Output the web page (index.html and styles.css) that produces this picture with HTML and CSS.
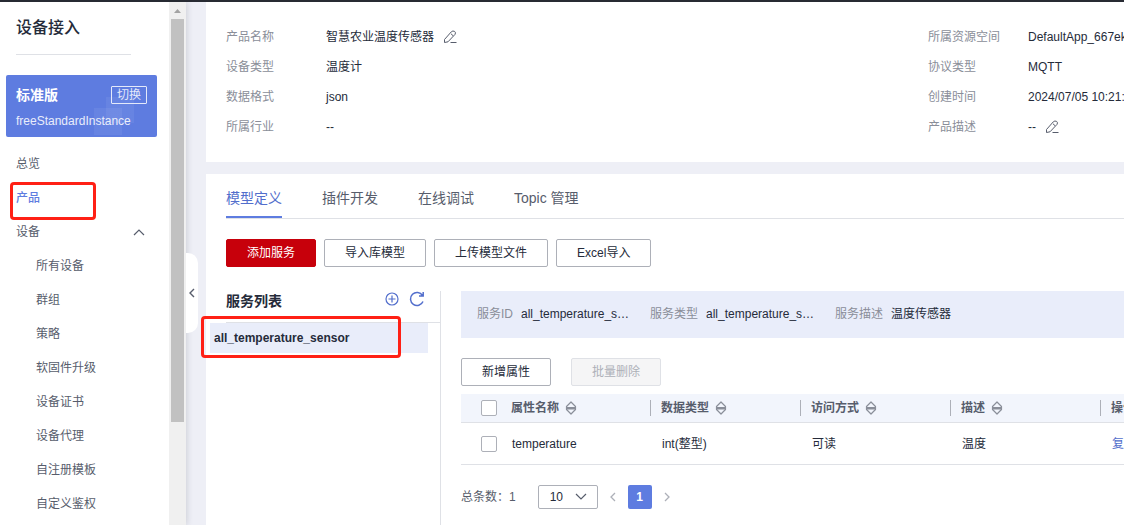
FILE: index.html
```html
<!DOCTYPE html>
<html lang="zh-CN">
<head>
  <meta charset="UTF-8">
  <title>设备接入</title>
  <link rel="stylesheet" href="styles.css">
</head>
<body>
  <svg class="sprite" aria-hidden="true">
    <symbol id="pencil" viewBox="0 0 14 14">
      <path d="M1.5 12.5 L1.5 9.5 L8.3 1.8 Q9.8 .4 11.6 1.4 Q13.2 2.6 12 4.4 L5 11.8 Z M8 3.8 L10.2 5.8 M7.5 12.5 H13.5" fill="none" stroke="currentColor"/>
    </symbol>
    <symbol id="sort" viewBox="0 0 12 14">
      <path d="M6 1 L10.5 5.5 V8.5 L6 13 L1.5 8.5 V5.5 Z" fill="none" stroke="currentColor" stroke-width="1.2" stroke-linejoin="round"/>
      <path d="M1 6 H11 V8.5 H1 Z" fill="currentColor"/>
    </symbol>
  </svg>

  <div class="topbar"></div>
  <div class="layout">
    <aside class="sidebar">
      <div class="sidebar-content">
        <h1>设备接入</h1>
        <div class="instance">
          <div class="instance-top">
            <strong>标准版</strong>
            <button class="switch">切换</button>
          </div>
          <div class="instance-name">freeStandardInstance</div>
        </div>
        <nav class="menu">
          <a href="#">总览</a>
          <a href="#" class="active">产品</a>
          <a href="#" class="group">设备
            <svg width="12" height="8" viewBox="0 0 12 8"><path d="M1 7 L6 2 L11 7" fill="none" stroke="currentColor" stroke-width="1.2"/></svg>
          </a>
          <a href="#" class="sub">所有设备</a>
          <a href="#" class="sub">群组</a>
          <a href="#" class="sub">策略</a>
          <a href="#" class="sub">软固件升级</a>
          <a href="#" class="sub">设备证书</a>
          <a href="#" class="sub">设备代理</a>
          <a href="#" class="sub">自注册模板</a>
          <a href="#" class="sub">自定义鉴权</a>
        </nav>
        <div class="mark mark-product"></div>
      </div>
      <div class="scrollbar">
        <svg width="17" height="17" viewBox="0 0 17 17"><path d="M5 11 L8.5 7 L12 11 Z" fill="#a3a3a3"/></svg>
        <div class="thumb"></div>
      </div>
      <button class="collapse" aria-label="收起">
        <svg width="6" height="10" viewBox="0 0 6 10"><path d="M5 1 L1 5 L5 9" fill="none" stroke="currentColor" stroke-width="1.4"/></svg>
      </button>
    </aside>

    <main class="main">
      <section class="panel info">
        <dl>
          <div><dt>产品名称</dt><dd>智慧农业温度传感器 <svg class="edit"><use href="#pencil"/></svg></dd></div>
          <div><dt>设备类型</dt><dd>温度计</dd></div>
          <div><dt>数据格式</dt><dd>json</dd></div>
          <div><dt>所属行业</dt><dd>--</dd></div>
        </dl>
        <dl>
          <div><dt>所属资源空间</dt><dd>DefaultApp_667ek</dd></div>
          <div><dt>协议类型</dt><dd>MQTT</dd></div>
          <div><dt>创建时间</dt><dd>2024/07/05 10:21:</dd></div>
          <div><dt>产品描述</dt><dd>-- <svg class="edit"><use href="#pencil"/></svg></dd></div>
        </dl>
      </section>

      <section class="panel model">
        <nav class="tabs">
          <a href="#" class="active">模型定义</a>
          <a href="#">插件开发</a>
          <a href="#">在线调试</a>
          <a href="#">Topic 管理</a>
        </nav>
        <div class="buttons">
          <button class="btn primary">添加服务</button>
          <button class="btn">导入库模型</button>
          <button class="btn">上传模型文件</button>
          <button class="btn">Excel导入</button>
        </div>

        <div class="service">
          <div class="service-list">
            <div class="service-head">
              <h2>服务列表</h2>
              <button class="icon" aria-label="添加">
                <svg width="14" height="14" viewBox="0 0 14 14"><path d="M7 3.5 V10.5 M3.5 7 H10.5" stroke="currentColor" stroke-width="1.2"/><circle cx="7" cy="7" r="6" fill="none" stroke="currentColor" stroke-width="1.2"/></svg>
              </button>
              <button class="icon" aria-label="刷新">
                <svg width="16" height="16" viewBox="0 0 16 16"><path d="M13.5 4.5 A6.5 6.5 0 1 0 14 10.5 M14.2 1 V5 H10" fill="none" stroke="currentColor" stroke-width="1.5"/></svg>
              </button>
            </div>
            <a href="#" class="service-item">all_temperature_sensor</a>
            <div class="mark mark-service"></div>
          </div>

          <div class="service-detail">
            <div class="summary">
              <span class="label">服务ID</span><span class="value">all_temperature_sensor</span>
              <span class="label">服务类型</span><span class="value">all_temperature_sensor</span>
              <span class="label">服务描述</span><span class="value">温度传感器</span>
            </div>
            <div class="table-buttons">
              <button class="btn">新增属性</button>
              <button class="btn" disabled>批量删除</button>
            </div>
            <table>
              <thead>
                <tr>
                  <th class="check"><input type="checkbox" aria-label="全选"></th>
                  <th class="col"><div class="head">属性名称<svg class="sort"><use href="#sort"/></svg></div></th>
                  <th class="col"><div class="head">数据类型<svg class="sort"><use href="#sort"/></svg></div></th>
                  <th class="col"><div class="head">访问方式<svg class="sort"><use href="#sort"/></svg></div></th>
                  <th class="col"><div class="head">描述<svg class="sort"><use href="#sort"/></svg></div></th>
                  <th><div class="head">操作</div></th>
                </tr>
              </thead>
              <tbody>
                <tr>
                  <td class="check"><input type="checkbox" aria-label="temperature"></td>
                  <td>temperature</td>
                  <td>int(整型)</td>
                  <td>可读</td>
                  <td>温度</td>
                  <td><a href="#">复制</a></td>
                </tr>
              </tbody>
            </table>
            <div class="pager">
              <label for="pageSize">总条数：1</label>
              <div class="select">
                <select id="pageSize"><option>10</option></select>
                <svg width="12" height="8" viewBox="0 0 12 8"><path d="M1 1 L6 6 L11 1" fill="none" stroke="currentColor" stroke-width="1.2"/></svg>
              </div>
              <button class="arrow" aria-label="上一页">
                <svg width="6" height="10" viewBox="0 0 6 10"><path d="M5 1 L1 5 L5 9" fill="none" stroke="currentColor" stroke-width="1.3"/></svg>
              </button>
              <button class="page">1</button>
              <button class="arrow" aria-label="下一页">
                <svg width="6" height="10" viewBox="0 0 6 10"><path d="M1 1 L5 5 L1 9" fill="none" stroke="currentColor" stroke-width="1.3"/></svg>
              </button>
            </div>
          </div>
        </div>
      </section>
    </main>
  </div>
</body>
</html>
```

FILE: styles.css
```css
* {
  box-sizing: border-box;
}

body {
  margin: 0;
  height: 100vh;
  display: flex;
  flex-direction: column;
  overflow: hidden;
  background: #eeeff6;
  color: #252b3a;
  font-family: "Liberation Sans", "Noto Sans CJK SC", sans-serif;
  font-size: 12px;
  line-height: 20px;
}

h1, h2, dl, dd {
  margin: 0;
}

a {
  color: inherit;
  text-decoration: none;
}

button, select {
  font: inherit;
  color: inherit;
  padding: 0;
  border: none;
  background: none;
  cursor: pointer;
}

svg {
  display: block;
  flex: none;
}

.sprite {
  position: absolute;
  width: 0;
  height: 0;
}

.topbar {
  height: 2px;
  flex: none;
  background: #282b33;
}

.layout {
  display: flex;
  flex: 1;
  min-height: 0;
}

/* sidebar */
.sidebar {
  position: relative;
  display: flex;
  flex: none;
  width: 186px;
  background: #fff;
  box-shadow: 1px 0 6px rgba(37, 43, 58, 0.16);
}

.sidebar-content {
  position: relative;
  flex: 1;
  overflow: hidden;
}

.sidebar h1 {
  margin: 0 38px 20px 16px;
  padding: 14px 0 14px;
  border-bottom: 1px solid #dfe1e6;
  font-size: 16px;
  font-weight: 500;
  line-height: 24px;
}

.instance {
  margin: 0 12px 10px 6px;
  padding: 10px;
  height: 62px;
  border-radius: 2px;
  color: #fff;
  background:
    linear-gradient(rgba(255, 255, 255, 0.06), rgba(255, 255, 255, 0.06)) 100px 22px / 28px 26px no-repeat,
    linear-gradient(rgba(255, 255, 255, 0.06), rgba(255, 255, 255, 0.06)) 88px 33px / 28px 27px no-repeat,
    #5e7ce0;
}

.instance-top {
  display: flex;
  justify-content: space-between;
  align-items: center;
  height: 20px;
}

.instance-top strong {
  font-size: 14px;
}

.switch {
  width: 36px;
  height: 18px;
  border: 1px solid #e4e9fa;
  border-radius: 1px;
  line-height: 16px;
  color: #e4e9fa;
}

.instance-name {
  padding-top: 6px;
  color: #e9edfb;
}

.menu a {
  display: block;
  padding-left: 16px;
  line-height: 34px;
  color: #575d6c;
}

.menu .active {
  color: #5e7ce0;
  font-weight: 500;
}

.menu .group {
  display: flex;
  justify-content: space-between;
  align-items: center;
  padding-right: 24px;
}

.menu .sub {
  padding-left: 36px;
}

.scrollbar {
  width: 17px;
  background: #f0f0f0;
}

.thumb {
  width: 13px;
  height: 77%;
  margin: 0 2px;
  background: #c1c1c1;
}

.collapse {
  position: absolute;
  left: 186px;
  top: 251px;
  display: flex;
  align-items: center;
  justify-content: center;
  width: 12px;
  height: 80px;
  border-radius: 0 10px 10px 0;
  background: #fff;
  color: #575d6c;
}

/* highlight frames */
.mark {
  position: absolute;
  border: 3px solid #ff2015;
  border-radius: 4px;
  pointer-events: none;
}

.mark-product {
  left: 10px;
  top: 180px;
  width: 86px;
  height: 38px;
}

.mark-service {
  left: -25px;
  top: 25px;
  width: 200px;
  height: 42px;
}

/* content */
.main {
  flex: 1;
  display: flex;
  flex-direction: column;
  min-width: 0;
  padding-left: 20px;
}

.panel {
  min-width: 1444px;
  padding: 0 20px;
  background: #fff;
}

.info {
  display: grid;
  grid-template-columns: 1fr 1fr;
  margin-bottom: 12px;
  padding: 20px;
}

.info div {
  display: flex;
  line-height: 30px;
}

.info dt {
  width: 100px;
  color: #8a8e99;
}

.info dd {
  display: flex;
  align-items: center;
  gap: 9px;
}

.edit {
  width: 14px;
  height: 14px;
  color: #575d6c;
}

.model {
  flex: 1;
}

.tabs {
  display: flex;
  gap: 40px;
  height: 45px;
  border-bottom: 1px solid #dfe1e6;
  font-size: 14px;
  line-height: 48px;
  color: #575d6c;
}

.tabs a {
  height: 44px;
}

.tabs .active {
  color: #526ecc;
  border-bottom: 2px solid #5e7ce0;
}

.buttons {
  display: flex;
  gap: 8px;
  padding: 20px 0 24px;
}

.btn {
  height: 28px;
  padding: 0 20px;
  border: 1px solid #adb0b8;
  border-radius: 2px;
  background: #fff;
  line-height: 26px;
}

.btn.primary {
  border-color: #c7000b;
  background: #c7000b;
  color: #fff;
}

.btn:disabled {
  border-color: #dfe1e6;
  background: #f5f5f6;
  color: #adb0b8;
}

.service {
  display: flex;
}

.service-list {
  position: relative;
  flex: none;
  width: 215px;
  height: 240px;
  border-right: 1px solid #dfe1e6;
}

.service-head {
  display: flex;
  align-items: flex-start;
  gap: 10px;
  height: 32px;
  padding-right: 15px;
  border-bottom: 1px solid #dfe1e6;
}

.service-head h2 {
  flex: 1;
  font-size: 14px;
  line-height: 20px;
}

.icon {
  display: flex;
  align-items: center;
  height: 16px;
  color: #526ecc;
}

.service-item {
  display: block;
  margin: 0 12px 0 -16px;
  padding-left: 4px;
  background: #e9edfa;
  font-weight: bold;
  line-height: 30px;
}

.service-detail {
  flex: 1;
  min-width: 0;
  padding-left: 20px;
}

.summary {
  display: flex;
  padding: 0 16px;
  background: #e9edfa;
  line-height: 47px;
}

.summary .label {
  margin-right: 8px;
  color: #8a8e99;
}

.summary .value {
  width: 112px;
  margin-right: 17px;
  overflow: hidden;
  text-overflow: ellipsis;
  white-space: nowrap;
}

.table-buttons {
  display: flex;
  gap: 20px;
  padding: 20px 0 8px;
}

table {
  width: 100%;
  table-layout: fixed;
  border-collapse: separate;
  border-spacing: 0;
}

th, td {
  padding: 0 0 0 11px;
  border-bottom: 1px solid #dfe1e6;
  text-align: left;
}

th {
  height: 29px;
  background: #f2f5fc;
  color: #575d6c;
}

td {
  height: 42px;
  padding-left: 12px;
}

th.check {
  width: 39px;
}

th.col {
  width: 150px;
}

.head {
  display: flex;
  align-items: center;
  gap: 6px;
}

/* short divider between header cells */
th.col + th {
  background: linear-gradient(#adb0b8, #adb0b8) 0 6px / 1px 16px no-repeat #f2f5fc;
}

.check {
  padding-left: 20px;
}

input[type="checkbox"] {
  appearance: none;
  display: block;
  width: 16px;
  height: 16px;
  margin: 0;
  border: 1px solid #adb0b8;
  border-radius: 2px;
  background: #fff;
}

.sort {
  width: 12px;
  height: 14px;
  color: #8a8e99;
}

td a {
  color: #526ecc;
}

.pager {
  display: flex;
  align-items: center;
  padding-top: 20px;
  color: #575d6c;
}

.select {
  display: flex;
  align-items: center;
  position: relative;
  margin: 0 12px 0 22px;
}

.select select {
  appearance: none;
  width: 60px;
  height: 24px;
  padding-left: 11px;
  border: 1px solid #adb0b8;
  border-radius: 2px;
  color: #252b3a;
}

.select svg {
  position: absolute;
  right: 11px;
  pointer-events: none;
}

.arrow {
  display: flex;
  justify-content: center;
  width: 6px;
  color: #adb0b8;
}

.page {
  width: 24px;
  height: 24px;
  margin: 0 12px;
  border-radius: 2px;
  background: #5e7ce0;
  color: #fff;
  font-weight: bold;
}
```
